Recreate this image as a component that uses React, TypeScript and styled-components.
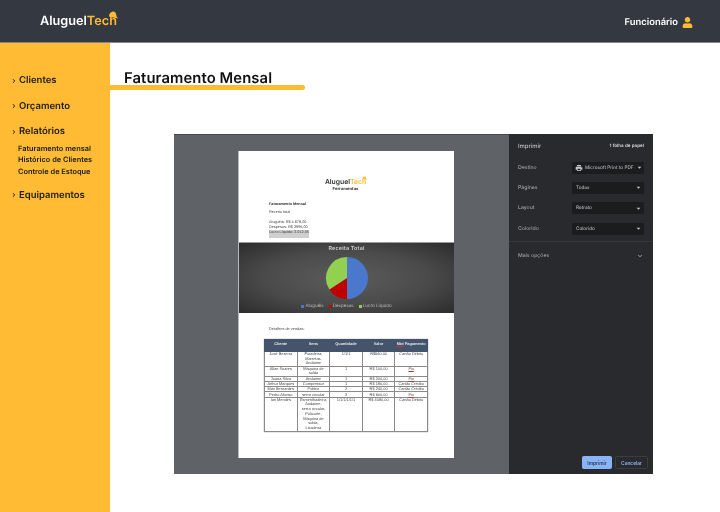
import React from 'react'
import styled, { createGlobalStyle } from 'styled-components'
import { FaUser } from 'react-icons/fa'
import { ChevronRight } from 'lucide-react'
import { MdPrint, MdArrowDropDown, MdExpandMore } from 'react-icons/md'

const GlobalStyle = createGlobalStyle`
  html, body { margin: 0; padding: 0; background: #fff; }
  body { font-family: Inter, "Noto Sans", sans-serif; text-rendering: geometricPrecision; }
`

const Page = styled.div`
  width: 720px;
  height: 512px;
  overflow: hidden;
  display: flex;
  flex-direction: column;
`

const Header = styled.header`
  height: 43px;
  flex: none;
  box-sizing: border-box;
  background: #343841;
  border-bottom: 1px solid #85878c;
  display: flex;
  align-items: center;
  justify-content: space-between;
  padding: 2px 27px 0 40px;
`

const LogoWrap = styled.div<{ $small?: boolean }>`
  position: relative;
  font-size: ${p => (p.$small ? '6.8px' : '12.7px')};
  font-weight: 600;
  color: ${p => (p.$small ? '#333' : '#fff')};
  line-height: 1;
  filter: blur(0.25px);
`

const LogoAccent = styled.span`
  color: #ffbb33;
`

const Helmet = styled.svg<{ $small?: boolean }>`
  position: absolute;
  right: ${p => (p.$small ? '-0.5px' : '-1px')};
  top: ${p => (p.$small ? '-3px' : '-4.5px')};
  width: ${p => (p.$small ? '5px' : '10px')};
  height: ${p => (p.$small ? '4.5px' : '8px')};
`

const UserBox = styled.div`
  display: flex;
  align-items: center;
  gap: 4px;
  color: #fff;
  font-size: 9.4px;
  font-weight: 600;
  filter: blur(0.2px);

  svg {
    color: #ffbb33;
    width: 11px;
    height: 11px;
  }
`

const Body = styled.div`
  flex: 1;
  display: flex;
  min-height: 0;
`

const Sidebar = styled.nav`
  width: 98px;
  flex: none;
  background: #ffbb33;
  padding: 31.5px 0 0 12px;
  filter: blur(0.2px);
`

const MenuItem = styled.div`
  display: flex;
  align-items: center;
  gap: 2px;
  height: 12px;
  margin-bottom: 13.6px;
  font-size: 9.5px;
  font-weight: 600;
  color: #1c1c1c;

  svg {
    flex: none;
    margin-left: -1px;
  }

  &:nth-of-type(3) {
    margin-bottom: 5px;
  }
`

const SubMenu = styled.div`
  display: flex;
  flex-direction: column;
  padding-left: 6px;
  margin-bottom: 12px;
`

const SubItem = styled.div`
  font-size: 7.4px;
  font-weight: 600;
  line-height: 11.6px;
  color: #1c1c1c;
`

const Main = styled.main`
  flex: 1;
  min-width: 0;
`

const TitleBlock = styled.div`
  position: relative;
  width: 195px;
  height: 47px;
  padding: 26px 0 0 14px;
  box-sizing: border-box;
`

const Title = styled.h1`
  margin: 0;
  font-size: 14.8px;
  line-height: 18px;
  font-weight: 600;
  color: #111;
  letter-spacing: 0.1px;
  white-space: nowrap;
  filter: blur(0.2px);
`

const TitleBar = styled.div`
  position: absolute;
  left: 0;
  right: 0;
  bottom: 0;
  height: 5px;
  background: #ffbb33;
  border-radius: 0 3px 3px 0;
`

const Dialog = styled.section`
  display: flex;
  width: 479px;
  height: 340px;
  margin: 44px 0 0 64px;
`

const Preview = styled.div`
  width: 335px;
  flex: none;
  box-sizing: border-box;
  background: #5f6267;
  border-top: 1px solid #45474b;
  padding: 16px 0 0 65px;
`

const Paper = styled.div`
  width: 215px;
  height: 307px;
  background: #fff;
  box-shadow: -1px 0 0 #b9babc;
  display: flex;
  flex-direction: column;
  align-items: stretch;
  filter: blur(0.4px);
  color: #333;
  font-family: "Liberation Sans", sans-serif;
`

const PaperHead = styled.div`
  height: 91px;
  box-sizing: border-box;
  padding: 28px 0 0 30px;
`

const PaperLogo = styled.div`
  display: flex;
  flex-direction: column;
  align-items: center;
  gap: 1px;
  width: 153px;
  font-family: Inter, sans-serif;
`

const PaperSub = styled.div`
  font-size: 4.2px;
  font-weight: 700;
  color: #333;
  line-height: 5px;
`

const PaperText = styled.div<{ $gap?: number; $bold?: boolean }>`
  margin-top: ${p => p.$gap ?? 0}px;
  font-size: 3.8px;
  line-height: 5.2px;
  white-space: nowrap;
  font-weight: ${p => (p.$bold ? 700 : 400)};
  color: ${p => (p.$bold ? '#222' : '#444')};
`

const Highlight = styled(PaperText)`
  width: 40px;
  height: 8px;
  background: #cfcfcf;
`

const ChartBand = styled.div`
  height: 71px;
  flex: none;
  box-sizing: border-box;
  padding-top: 3px;
  background: radial-gradient(ellipse at center, #5c5c5c 0%, #4a4a4a 55%, #2c2c2c 100%);
  border-top: 1px solid #9a9a9a;
  display: flex;
  flex-direction: column;
  align-items: center;
  font-family: Inter, sans-serif;
`

const ChartTitle = styled.div`
  font-size: 5.4px;
  font-weight: 600;
  line-height: 7px;
  color: #d0d0d0;
  letter-spacing: 0.2px;
`

const Pie = styled.svg`
  display: block;
  width: 44px;
  height: 44px;
  margin-top: 3px;
`

const Legend = styled.div`
  display: flex;
  align-items: center;
  gap: 5px;
  margin-top: 3.5px;
  font-size: 4.5px;
  line-height: 6px;
  color: #b8b8b8;
`

const LegendItem = styled.span<{ $c: string }>`
  display: flex;
  align-items: center;
  gap: 1px;

  &::before {
    content: '';
    width: 3px;
    height: 3px;
    background: ${p => p.$c};
  }
`

const Details = styled.div`
  padding: 13px 0 0 30px;
  font-size: 3.9px;
  line-height: 5px;
  color: #444;
`

const Table = styled.table`
  margin: 8px 0 0 25px;
  width: 164px;
  table-layout: fixed;
  border-collapse: collapse;
  font-size: 3.9px;
  color: #444;
  box-shadow: 0 0 1px #777;

  th {
    height: 10px;
    padding: 1px 0 0;
    line-height: 5px;
    background: #44546a;
    color: #e4e7ee;
    font-weight: 700;
    border: 0.5px solid #44546a;
    vertical-align: top;
  }

  td {
    padding: 0;
    text-align: center;
    vertical-align: top;
    white-space: pre-line;
    border: 1px solid #8a8a8a;
    border-top-width: 0.6px;
    border-bottom-width: 0.6px;
  }
`

const Row = styled.tr<{ $lh: number }>`
  td {
    line-height: ${p => p.$lh}px;
  }
`

const Spell = styled.span`
  text-decoration: underline solid #d03030 0.6px;
`

const Panel = styled.aside`
  flex: 1;
  background: #292a2d;
  display: flex;
  flex-direction: column;
  color: #b4b5b8;
  font-size: 5.2px;
  filter: blur(0.3px);
`

const PanelHead = styled.div`
  display: flex;
  justify-content: space-between;
  align-items: center;
  padding: 7px 9px 0;
  height: 11px;
  margin-bottom: 9.5px;
`

const PanelTitle = styled.span`
  font-size: 6px;
  color: #d5d6d8;
`

const Sheets = styled.span`
  font-size: 4.6px;
  font-weight: 600;
  color: #d5d6d8;
`

const FieldList = styled.div`
  display: flex;
  flex-direction: column;
  gap: 8.4px;
  padding: 0 9px 6.5px;
`

const Field = styled.div`
  display: flex;
  align-items: center;
  justify-content: space-between;
  height: 12px;
`

const Select = styled.div`
  width: 72px;
  height: 12px;
  box-sizing: border-box;
  padding: 0 1px 0 3px;
  background: #1b1c1e;
  border-radius: 1px;
  display: flex;
  align-items: center;
  gap: 1px;
  font-size: 4.7px;
  color: #c6c7ca;

  span {
    flex: 1;
    white-space: nowrap;
    padding-left: 1px;
  }

  svg {
    flex: none;
  }
`

const Divider = styled.div`
  height: 1px;
  background: #38393c;
`

const MoreRow = styled.div`
  display: flex;
  align-items: center;
  justify-content: space-between;
  padding: 0 9px;
  height: 12px;
  margin-top: 8px;
`

const Actions = styled.div`
  margin-top: auto;
  display: flex;
  justify-content: flex-end;
  gap: 3px;
  padding: 0 5px 5px 0;
`

const Button = styled.button<{ $primary?: boolean }>`
  height: 13px;
  width: ${p => (p.$primary ? '30px' : '33px')};
  padding: 0;
  border-radius: 1.5px;
  border: 1px solid ${p => (p.$primary ? '#8ab4f8' : '#3c3d40')};
  background: ${p => (p.$primary ? '#8ab4f8' : 'transparent')};
  color: ${p => (p.$primary ? '#2a3950' : '#8ab4f8')};
  font-family: inherit;
  font-size: 4.8px;
  font-weight: 600;
`

function Logo({ small }: { small?: boolean }) {
  return (
    <LogoWrap $small={small}>
      Aluguel<LogoAccent>Tech</LogoAccent>
      <Helmet $small={small} viewBox="0 0 20 16">
        <path d="M2 11 C2 4 7 1 11 1 C15 1 17 6 17 11 L20 15 C14 14 7 12 2 11 Z" fill="#ffbb33" />
      </Helmet>
    </LogoWrap>
  )
}

const rows = [
  { lh: 4.67, c: ['José Bezerra', 'Furadeira,\nMarretas,\nAndaime', '1/1/1', 'R$560,00', 'Cartão Débito'] },
  { lh: 4.25, c: ['Allan Soares', 'Máquina de\nsolda', '1', 'R$ 100,00', 'Pix'] },
  { lh: 4, c: ['Joana Silva', 'Andaime', '1', 'R$ 200,00', 'Pix'] },
  { lh: 4, c: ['Arthur Marques', 'Compressor', '1', 'R$ 180,00', 'Cartão Crédito'] },
  { lh: 4, c: ['Max Bernardes', 'Politriz', '2', 'R$ 240,00', 'Cartão Crédito'] },
  { lh: 5, c: ['Pedro Afonso', 'serra circular', '3', 'R$ 600,00', 'Pix'] },
  { lh: 4.78, c: ['Ian Mendes', 'Esmerilhadeira,\nAndaime,\nserra circular,\nPolicorte,\nMáquina de\nsolda,\nLixadeira', '1/1/1/1/1/1', 'R$ 4080,00', 'Cartão Débito'] },
]

const selects = [
  { label: 'Destino', value: 'Microsoft Print to PDF', printer: true },
  { label: 'Páginas', value: 'Todas' },
  { label: 'Layout', value: 'Retrato' },
  { label: 'Colorido', value: 'Colorido' },
]

const menuIcon = <ChevronRight size={6} strokeWidth={4} />

export default function App() {
  return (
    <Page>
      <GlobalStyle />
      <Header>
        <Logo />
        <UserBox>
          Funcionário <FaUser />
        </UserBox>
      </Header>
      <Body>
        <Sidebar>
          <MenuItem>{menuIcon}Clientes</MenuItem>
          <MenuItem>{menuIcon}Orçamento</MenuItem>
          <MenuItem>{menuIcon}Relatórios</MenuItem>
          <SubMenu>
            <SubItem>Faturamento mensal</SubItem>
            <SubItem>Histórico de Clientes</SubItem>
            <SubItem>Controle de Estoque</SubItem>
          </SubMenu>
          <MenuItem>{menuIcon}Equipamentos</MenuItem>
        </Sidebar>
        <Main>
          <TitleBlock>
            <Title>Faturamento Mensal</Title>
            <TitleBar />
          </TitleBlock>
          <Dialog>
            <Preview>
              <Paper>
                <PaperHead>
                  <PaperLogo>
                    <Logo small />
                    <PaperSub>Ferramentas</PaperSub>
                  </PaperLogo>
                  <PaperText $gap={10} $bold>Faturamento Mensal</PaperText>
                  <PaperText $gap={3.4}>Receita total</PaperText>
                  <PaperText $gap={4.2}>Aluguéis: R$ 4.678,00</PaperText>
                  <PaperText>Despesas: R$ 2995,00</PaperText>
                  <Highlight>Lucro Líquido: 3.012,05</Highlight>
                </PaperHead>
                <ChartBand>
                  <ChartTitle>Receita Total</ChartTitle>
                  <Pie viewBox="0 0 44 44">
                    <path d="M22 1 A21 21 0 0 1 22 43 Z" fill="#4a78cc" />
                    <path d="M22 22 L22 43 A21 21 0 0 1 4.4 33.4 Z" fill="#c00000" />
                    <path d="M22 22 L4.4 33.4 A21 21 0 0 1 22 1 Z" fill="#92d050" />
                  </Pie>
                  <Legend>
                    <LegendItem $c="#4a78cc">Aluguéis</LegendItem>
                    <LegendItem $c="#c00000">Despesas</LegendItem>
                    <LegendItem $c="#92d050">Lucro Líquido</LegendItem>
                  </Legend>
                </ChartBand>
                <Details>Detalhes de vendas:</Details>
                <Table>
                  <thead>
                    <tr>
                      <th>Cliente</th>
                      <th>Itens</th>
                      <th>Quantidade</th>
                      <th>Valor</th>
                      <th><Spell>Mtd</Spell> Pagamento</th>
                    </tr>
                  </thead>
                  <tbody>
                    {rows.map(r => (
                      <Row key={r.c[0]} $lh={r.lh}>
                        {r.c.map((v, i) => <td key={i}>{v === 'Pix' ? <Spell>{v}</Spell> : v}</td>)}
                      </Row>
                    ))}
                  </tbody>
                </Table>
              </Paper>
            </Preview>
            <Panel>
              <PanelHead>
                <PanelTitle>Imprimir</PanelTitle>
                <Sheets>1 folha de papel</Sheets>
              </PanelHead>
              <FieldList>
                {selects.map(s => (
                  <Field key={s.label}>
                    <span>{s.label}</span>
                    <Select>
                      {s.printer && <MdPrint size={8} />}
                      <span>{s.value}</span>
                      <MdArrowDropDown size={9} />
                    </Select>
                  </Field>
                ))}
              </FieldList>
              <Divider />
              <MoreRow>
                <span>Mais opções</span>
                <MdExpandMore size={8} />
              </MoreRow>
              <Actions>
                <Button $primary>Imprimir</Button>
                <Button>Cancelar</Button>
              </Actions>
            </Panel>
          </Dialog>
        </Main>
      </Body>
    </Page>
  )
}
